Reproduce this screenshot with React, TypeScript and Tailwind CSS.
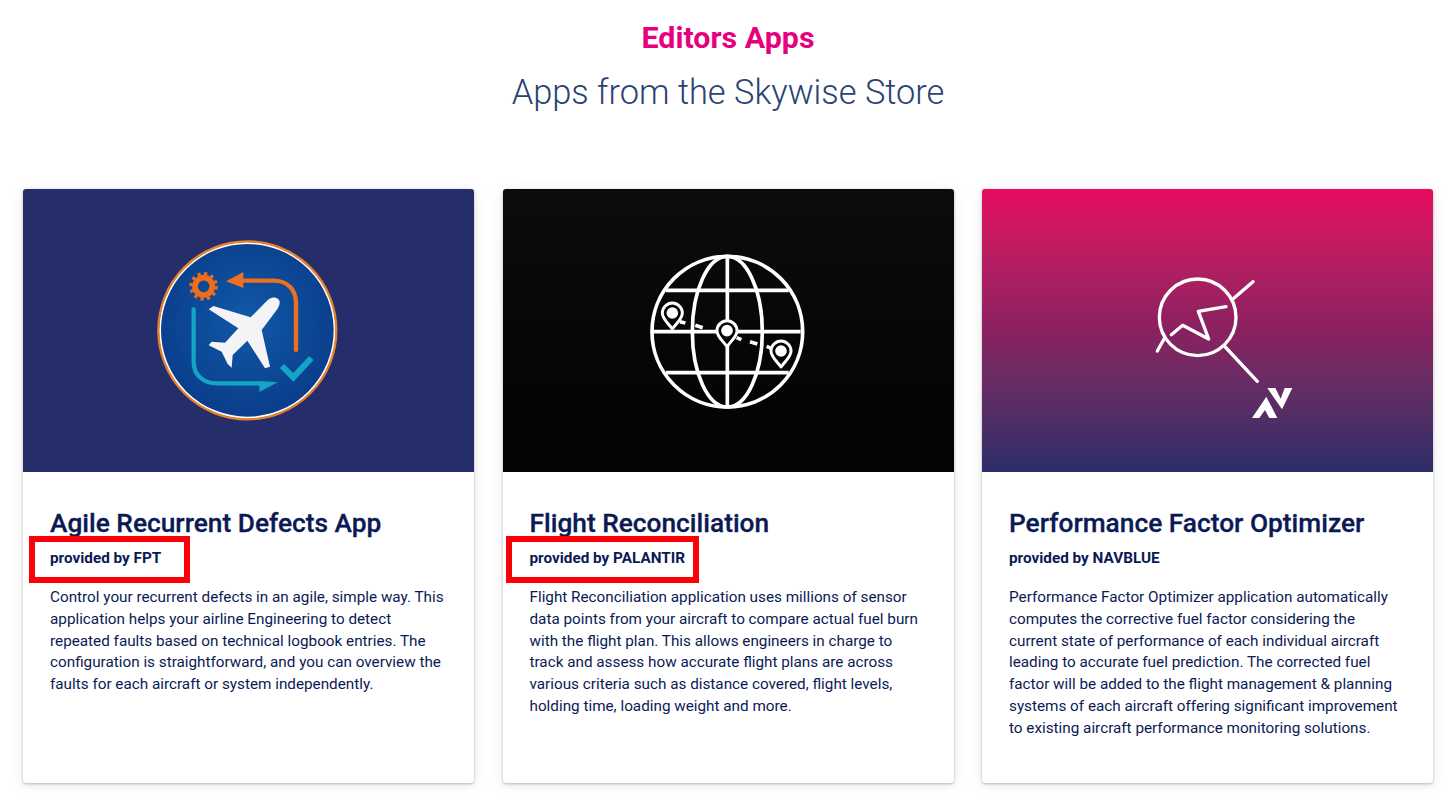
const navy = "text-[#0b1a55]";

function AgileIcon() {
  return (
    <svg width="230" height="220" viewBox="0 0 690 660" fill="none">
      <defs>
        <radialGradient id="agileBg" cx="50%" cy="45%" r="60%">
          <stop offset="0%" stopColor="#0f5aa8" />
          <stop offset="100%" stopColor="#0a3a88" />
        </radialGradient>
      </defs>
      <circle cx="352" cy="331" r="262" fill="url(#agileBg)" stroke="#ffffff" strokeWidth="6" />
      <circle cx="352" cy="331" r="267" stroke="#e3812f" strokeWidth="7" />
      {/* gear */}
      <circle cx="221" cy="199" r="26" stroke="#ef6c1a" strokeWidth="17" />
      <circle cx="221" cy="199" r="37" stroke="#ef6c1a" strokeWidth="12" strokeDasharray="9 10.4" />
      {/* orange arrow */}
      <path d="M330 182H430C472 182 498 208 498 250V390" stroke="#ee6f1f" strokeWidth="13" strokeLinecap="round" />
      <path d="M288 184L340 156V204Z" fill="#ee6f1f" />
      {/* teal arrow */}
      <path d="M191 268V425C191 465 220 490 260 490H400" stroke="#13a5c4" strokeWidth="13" strokeLinecap="round" />
      <path d="M444 486L388 484V516Z" fill="#13a5c4" />
      <path d="M456 438L490 472L544 414" stroke="#13a5c4" strokeWidth="18" />
      {/* plane */}
      <path
        d="M445 238C435 228 420 232 408 245L362 292L250 258L236 268L325 325L285 368L245 365L236 376L275 395L293 432L305 443L308 405L352 362L405 445L420 440L395 330L440 270C450 255 452 245 445 238Z"
        fill="#f4f4f6"
      />
    </svg>
  );
}

function Pin({ x, y }: { x: number; y: number }) {
  return (
    <g transform={`translate(${x} ${y})`}>
      <path d="M0 42C-14 22 -30 12 -30 -6C-30 -22 -16 -36 0 -36C16 -36 30 -22 30 -6C30 12 14 22 0 42Z" fill="#050505" stroke="#ffffff" strokeWidth="9" strokeLinejoin="round" />
      <circle cx="0" cy="-6" r="12" fill="#ffffff" />
    </g>
  );
}

function GlobeIcon() {
  return (
    <svg width="190" height="190" viewBox="0 0 570 570" fill="none" stroke="#ffffff" strokeWidth="11">
      <circle cx="292" cy="287" r="226" />
      <ellipse cx="292" cy="287" rx="105" ry="226" />
      <path d="M292 61V513M66 287H512M108 163H476M108 410H476" />
      <path d="M150 257L166 261M196 268L218 275M320 305L334 311M360 317L382 324M410 331L424 337" />
      <Pin x={127} y={237} />
      <Pin x={291} y={290} />
      <Pin x={453} y={351} />
    </svg>
  );
}

function OptimizerIcon() {
  return (
    <svg width="190" height="170" viewBox="0 0 570 510" fill="none" stroke="#ffffff" strokeWidth="10" strokeLinecap="round" strokeLinejoin="round">
      <circle cx="203" cy="172" r="115" />
      <path d="M308 118L369 65M102 237L82 273M283 258L382 364" />
      <path d="M124 224L158 196L236 237L205 154L288 140" />
      <path d="M366 474L409 410L442 474H418L405 450L388 474Z" fill="#ffffff" stroke="none" />
      <path d="M412 384H436L452 416L464 384H487L456 448Z" fill="#ffffff" stroke="none" />
    </svg>
  );
}

const apps = [
  {
    title: "Agile Recurrent Defects App",
    provider: "provided by FPT",
    bg: "bg-[#252d6a]",
    icon: <AgileIcon />,
    iconPad: "pr-[8px] pb-[1px]",
    lines: [
      "Control your recurrent defects in an agile, simple way. This",
      "application helps your airline Engineering to detect",
      "repeated faults based on technical logbook entries. The",
      "configuration is straightforward, and you can overview the",
      "faults for each aircraft or system independently.",
    ],
    mark: "left-[6px] w-[161px]",
  },
  {
    title: "Flight Reconciliation",
    provider: "provided by PALANTIR",
    bg: "bg-gradient-to-b from-[#0c0c0c] to-[#030303]",
    icon: <GlobeIcon />,
    iconPad: "pr-[7px]",
    lines: [
      "Flight Reconciliation application uses millions of sensor",
      "data points from your aircraft to compare actual fuel burn",
      "with the flight plan. This allows engineers in charge to",
      "track and assess how accurate flight plans are across",
      "various criteria such as distance covered, flight levels,",
      "holding time, loading weight and more.",
    ],
    mark: "left-[3px] w-[193px]",
  },
  {
    title: "Performance Factor Optimizer",
    provider: "provided by NAVBLUE",
    bg: "bg-gradient-to-b from-[#e60a60] via-[#8a2060] to-[#2a2c68]",
    icon: <OptimizerIcon />,
    iconPad: "pl-[35px] pt-[29px]",
    lines: [
      "Performance Factor Optimizer application automatically",
      "computes the corrective fuel factor considering the",
      "current state of performance of each individual aircraft",
      "leading to accurate fuel prediction. The corrected fuel",
      "factor will be added to the flight management & planning",
      "systems of each aircraft offering significant improvement",
      "to existing aircraft performance monitoring solutions.",
    ],
    mark: "",
  },
];

export default function App() {
  return (
    <div className="h-[795px] w-[1456px] overflow-hidden bg-white font-['Roboto',sans-serif]">
      <header className="flex h-[189px] flex-col items-center pt-[18px]">
        <h1 className="text-[30.4px] font-bold leading-[40px] text-[#e6007e]">Editors Apps</h1>
        <h2 className="mt-[9px] text-[34.4px] font-light leading-[50px] text-[#2a4274]">Apps from the Skywise Store</h2>
      </header>
      <div className="grid grid-cols-3 gap-[28.5px] px-[23px]">
        {apps.map((app) => (
          <div key={app.title} className="relative h-[594px] rounded-[3px] bg-white shadow-[0_1px_3px_rgba(0,0,0,0.25),0_2px_14px_rgba(0,0,0,0.08)]">
            <div className={`flex h-[283px] items-center justify-center rounded-t-[3px] ${app.bg} ${app.iconPad}`}>{app.icon}</div>
            <div className={`px-[27px] pt-[33px] ${navy}`}>
              <h3 className="text-[26.3px] font-medium leading-[36px] [-webkit-text-stroke:0.3px_#0b1a55]">{app.title}</h3>
              <p className="mt-[6px] text-[15.3px] font-bold leading-[22px]">{app.provider}</p>
              <div className="mt-[18px] text-[15.27px] leading-[21.75px]">
                {app.lines.map((line) => (
                  <div key={line} className="whitespace-nowrap">{line}</div>
                ))}
              </div>
            </div>
            {app.mark && (
              <div className={`absolute top-[347px] h-[47px] border-[6px] border-[#fb0007] ${app.mark}`} />
            )}
          </div>
        ))}
      </div>
    </div>
  );
}
